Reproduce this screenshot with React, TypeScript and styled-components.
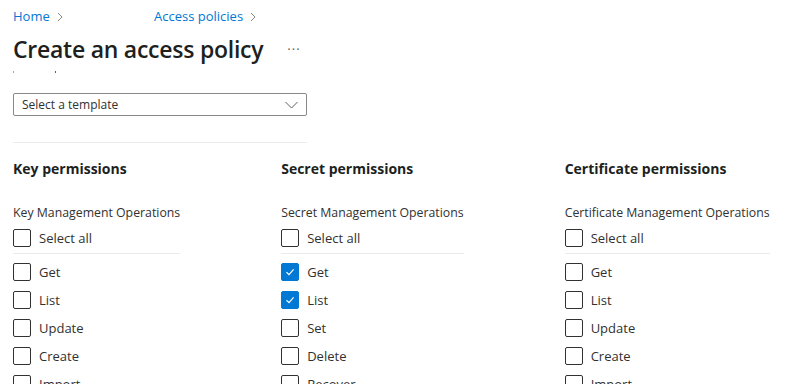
import React from "react";
import styled, { createGlobalStyle } from "styled-components";

const GlobalStyle = createGlobalStyle`
  body {
    margin: 0;
    background: #ffffff;
    font-family: "Open Sans", "Noto Sans", sans-serif;
    color: #323130;
  }
`;

type Perm = { label: string; checked?: boolean };
type Group = { title: string; sub: string; items: Perm[] };

const groups: Group[] = [
  {
    title: "Key permissions",
    sub: "Key Management Operations",
    items: [{ label: "Get" }, { label: "List" }, { label: "Update" }, { label: "Create" }, { label: "Import" }],
  },
  {
    title: "Secret permissions",
    sub: "Secret Management Operations",
    items: [
      { label: "Get", checked: true },
      { label: "List", checked: true },
      { label: "Set" },
      { label: "Delete" },
      { label: "Recover" },
    ],
  },
  {
    title: "Certificate permissions",
    sub: "Certificate Management Operations",
    items: [{ label: "Get" }, { label: "List" }, { label: "Update" }, { label: "Create" }, { label: "Import" }],
  },
];

const Chevron = () => (
  <svg width="8" height="10" viewBox="0 0 8 10">
    <path d="M2 1 L6 5 L2 9" fill="none" stroke="#8a8886" strokeWidth="1" />
  </svg>
);

const Check = () => (
  <svg width="12" height="12" viewBox="0 0 12 12">
    <path d="M2.5 6.2 L5 8.6 L9.6 3.4" fill="none" stroke="#ffffff" strokeWidth="1.2" />
  </svg>
);

const App = () => {
  return (
    <Page>
      <GlobalStyle />
      <Breadcrumb>
        <Crumb>
          Home <Chevron />
        </Crumb>
        <Crumb>
          Access policies <Chevron />
        </Crumb>
      </Breadcrumb>
      <TitleRow>
        <Title>Create an access policy</Title>
        <More>···</More>
      </TitleRow>
      <ClippedLabel>
        <Tick color="#c8a079" />
        <Tick color="#605e5c" />
      </ClippedLabel>
      <Dropdown>
        <span>Select a template</span>
        <svg width="13" height="8" viewBox="0 0 13 8">
          <path d="M0.5 1 L6.5 7 L12.5 1" fill="none" stroke="#605e5c" strokeWidth="1" />
        </svg>
      </Dropdown>
      <Rule />
      <Columns>
        {groups.map((g) => (
          <Column key={g.title}>
            <Heading>{g.title}</Heading>
            <SubHeading>{g.sub}</SubHeading>
            <SelectAll>
              <Box />
              <Label>Select all</Label>
            </SelectAll>
            <List>
              {g.items.map((p) => (
                <Row key={p.label}>
                  <Box checked={p.checked}>{p.checked && <Check />}</Box>
                  <Label>{p.label}</Label>
                </Row>
              ))}
            </List>
          </Column>
        ))}
      </Columns>
    </Page>
  );
};

export default App;

const Page = styled.div`
  width: 806px;
  height: 384px;
  overflow: hidden;
  padding: 8px 0 0 13px;
  box-sizing: border-box;
`;

const Breadcrumb = styled.div`
  display: flex;
  height: 16px;
  align-items: center;
`;

const Crumb = styled.span`
  display: inline-flex;
  align-items: center;
  gap: 6px;
  font-size: 13px;
  color: #0078d4;
  width: 141px;
  white-space: nowrap;
  svg {
    margin-top: 1px;
  }
`;

const TitleRow = styled.div`
  display: flex;
  align-items: center;
  height: 34px;
  margin-top: 8px;
`;

const Title = styled.h1`
  margin: 0;
  font-size: 23px;
  font-weight: 600;
  color: #201f1e;
  letter-spacing: -0.25px;
`;

const More = styled.span`
  margin-left: 24px;
  font-size: 13px;
  color: #605e5c;
  letter-spacing: 1px;
`;

const ClippedLabel = styled.div`
  display: flex;
  align-items: flex-end;
  gap: 41px;
  height: 4px;
  margin-top: 3px;
`;

const Tick = styled.span<{ color: string }>`
  width: 1px;
  height: 2px;
  background: ${(p) => p.color};
`;

const Dropdown = styled.div`
  margin-top: 20px;
  width: 294px;
  height: 23px;
  box-sizing: border-box;
  border: 1px solid #8a8886;
  border-radius: 2px;
  display: flex;
  align-items: center;
  justify-content: space-between;
  padding: 0 8px 0 8px;
  font-size: 12px;
  color: #323130;
`;

const Rule = styled.div`
  margin-top: 26px;
  width: 294px;
  height: 1px;
  background: #edebe9;
`;

const Columns = styled.div`
  display: flex;
  gap: 101px;
  margin-top: 14px;
`;

const Column = styled.div`
  display: flex;
  flex-direction: column;
`;

const Heading = styled.div`
  font-size: 14px;
  font-weight: 700;
  color: #201f1e;
  height: 24px;
  line-height: 24px;
  white-space: nowrap;
`;

const SubHeading = styled.div`
  margin-top: 24px;
  font-size: 12.3px;
  height: 16px;
  line-height: 16px;
  white-space: nowrap;
`;

const SelectAll = styled.div`
  display: flex;
  align-items: center;
  gap: 8px;
  margin-top: 8px;
  padding-bottom: 6px;
  border-bottom: 1px solid #edebe9;
`;

const List = styled.div`
  display: flex;
  flex-direction: column;
  gap: 10px;
  margin-top: 9px;
`;

const Row = styled.div`
  display: flex;
  align-items: center;
  gap: 8px;
`;

const Box = styled.span<{ checked?: boolean }>`
  width: 18px;
  height: 18px;
  box-sizing: border-box;
  border-radius: 2px;
  border: 1px solid ${(p) => (p.checked ? "#0078d4" : "#323130")};
  background: ${(p) => (p.checked ? "#0078d4" : "#ffffff")};
  display: flex;
  align-items: center;
  justify-content: center;
  flex-shrink: 0;
`;

const Label = styled.span`
  font-size: 13px;
  line-height: 18px;
  color: #323130;
`;
